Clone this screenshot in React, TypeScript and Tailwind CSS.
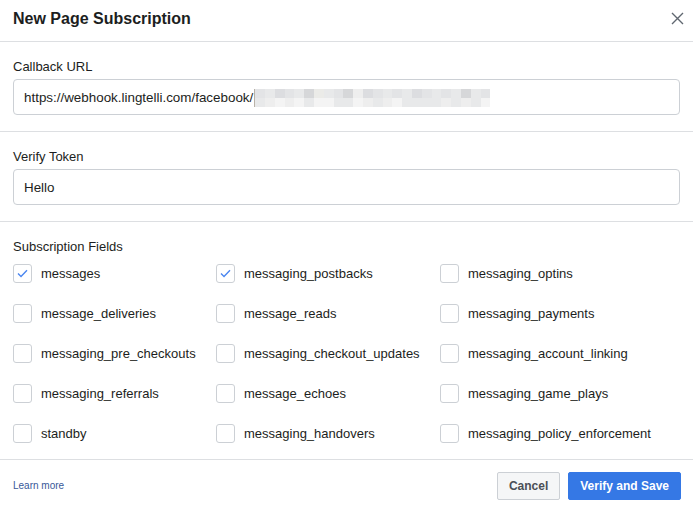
import React from "react";

const fields: [string, boolean][][] = [
  [["messages", true], ["messaging_postbacks", true], ["messaging_optins", false]],
  [["message_deliveries", false], ["message_reads", false], ["messaging_payments", false]],
  [["messaging_pre_checkouts", false], ["messaging_checkout_updates", false], ["messaging_account_linking", false]],
  [["messaging_referrals", false], ["message_echoes", false], ["messaging_game_plays", false]],
  [["standby", false], ["messaging_handovers", false], ["messaging_policy_enforcement", false]],
];

const palette = [
  "bg-[#e3e4e6]",
  "bg-[#dcdde0]",
  "bg-[#eeeeee]",
  "bg-[#e8e9ea]",
  "bg-[#f4f4f4]",
  "bg-[#d6d7d9]",
  "bg-[#ebebe8]",
];
const topRow = [0, 3, 1, 0, 3, 5, 6, 3, 0, 5, 2, 1, 0, 3, 0, 3, 1, 0, 3, 0, 3, 5, 3, 0];
const botRow = [3, 2, 4, 2, 4, 3, 4, 4, 3, 3, 4, 2, 3, 2, 4, 3, 3, 3, 3, 2, 3, 2, 3, 4];

function Checkbox({ checked }: { checked: boolean }) {
  return (
    <div className="w-[19px] h-[19px] rounded-[3px] border border-[#ccd0d5] bg-white flex items-center justify-center shrink-0">
      {checked && (
        <svg width="11" height="9" viewBox="0 0 11 9" fill="none">
          <path d="M1 4.6 L4 7.4 L10 1.2" stroke="#4a86f0" strokeWidth="1.4" />
        </svg>
      )}
    </div>
  );
}

export default function App() {
  return (
    <div className="w-[693px] h-[508px] bg-white text-[#1c1e21] font-['Liberation_Sans',Arial,sans-serif] flex flex-col">
      <div className="h-[42px] flex items-center justify-between px-[13px] border-b border-[#dddfe2] shrink-0">
        <div className="text-[16px] font-bold leading-[20px] -mt-[4px]">New Page Subscription</div>
        <svg width="13" height="13" viewBox="0 0 13 13" className="-mt-[5px] mr-[-4px]">
          <path d="M1 1 L12 12 M12 1 L1 12" stroke="#606770" strokeWidth="1.4" />
        </svg>
      </div>

      <div className="px-[13px] pt-[17px] pb-[16px] border-b border-[#dddfe2]">
        <div className="text-[13px] leading-[16px] mb-[4px]">Callback URL</div>
        <div className="h-[36px] border border-[#ccd0d5] rounded-[4px] flex items-center px-[10px] pt-[2px] text-[13.4px] text-[#1c1e21]">
          <span>https://webhook.lingtelli.com/facebook/</span>
          <span className="w-px h-[18px] bg-[#b9b2a8] ml-[1px]"></span>
          <div className="flex flex-col">
            <div className="flex">
              {topRow.map((c, i) => (
                <div key={i} className={`w-[9.8px] h-[9px] ${palette[c]}`}></div>
              ))}
            </div>
            <div className="flex">
              {botRow.map((c, i) => (
                <div key={i} className={`w-[9.8px] h-[9px] ${palette[c]}`}></div>
              ))}
            </div>
          </div>
        </div>
      </div>

      <div className="px-[13px] pt-[17px] pb-[16px] border-b border-[#dddfe2]">
        <div className="text-[13px] leading-[16px] mb-[4px]">Verify Token</div>
        <div className="h-[36px] border border-[#ccd0d5] rounded-[4px] flex items-center px-[10px] pt-[2px] text-[13.4px]">
          Hello
        </div>
      </div>

      <div className="px-[13px] pt-[17px] pb-[6px] border-b border-[#dddfe2]">
        <div className="text-[13px] leading-[16px] mb-[-2px]">Subscription Fields</div>
        <div className="grid grid-cols-[203px_224px_1fr]">
          {fields.flat().map(([name, checked]) => (
            <div key={name} className="h-[40px] flex items-center gap-[9px]">
              <Checkbox checked={checked} />
              <span className="text-[13px] leading-[16px] mt-[2px]">{name}</span>
            </div>
          ))}
        </div>
      </div>

      <div className="flex-1 flex items-center justify-between pl-[13px] pr-[12px] pt-[4px]">
        <a className="text-[10px] text-[#385898] leading-[12px]">Learn more</a>
        <div className="flex gap-[8px]">
          <button className="h-[28px] px-[11px] rounded-[2px] border border-[#ccd0d5] bg-[#f5f6f7] text-[#4b4f56] text-[12px] font-bold">
            Cancel
          </button>
          <button className="h-[28px] px-[11px] rounded-[2px] border border-[#3578e5] bg-[#3578e5] text-white text-[12px] font-bold">
            Verify and Save
          </button>
        </div>
      </div>
    </div>
  );
}
